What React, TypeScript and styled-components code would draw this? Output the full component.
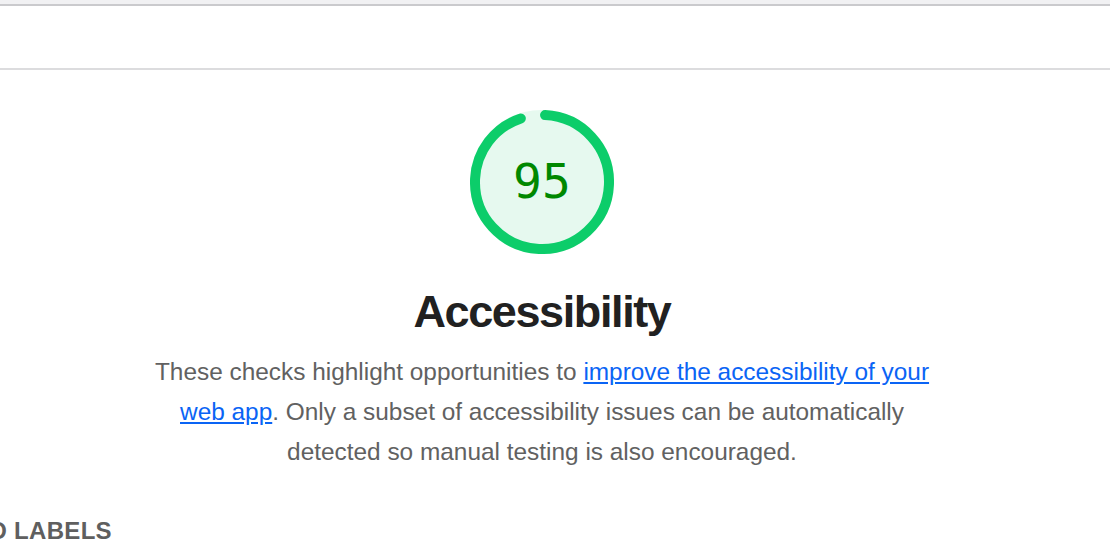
import React from "react";
import styled, { createGlobalStyle } from "styled-components";

const GlobalStyle = createGlobalStyle`
  html, body { margin: 0; padding: 0; background: #ffffff; }
  body {
    font-family: "Liberation Sans", Arial, Helvetica, sans-serif;
    -webkit-font-smoothing: antialiased;
    overflow: hidden;
  }
`;

const Page = styled.div`
  width: 1110px;
  height: 560px;
  overflow: hidden;
  display: flex;
  flex-direction: column;
`;

const TopStrip = styled.div`
  height: 4px;
  background: #f1f1f3;
  border-bottom: 2px solid #cacacd;
`;

const Toolbar = styled.div`
  height: 62px;
  border-bottom: 2px solid #dcdcde;
  background: #ffffff;
`;

const Report = styled.main`
  width: 1084px;
  display: flex;
  flex-direction: column;
  align-items: center;
`;

const GaugeWrap = styled.div`
  margin-top: 40px;
  width: 144px;
  height: 144px;
  position: relative;
`;

const GaugeSvg = styled.svg`
  display: block;
  width: 144px;
  height: 144px;
`;

const GaugeValue = styled.div`
  position: absolute;
  inset: 0;
  display: flex;
  align-items: center;
  justify-content: center;
  font-family: "DejaVu Sans Mono", Menlo, monospace;
  font-size: 48px;
  color: #008800;
  padding-bottom: 2px;
`;

const Title = styled.h1`
  margin: 32px 0 0;
  font-size: 45px;
  line-height: 52px;
  font-weight: 700;
  color: #212121;
  letter-spacing: -1.4px;
`;

const Description = styled.p`
  margin: 14px 0 0;
  max-width: 796px;
  text-align: center;
  font-size: 24.4px;
  line-height: 40px;
  color: #616161;
`;

const Link = styled.a`
  color: #0a64f5;
  text-decoration: underline;
  text-underline-offset: 2px;
`;

const GroupClip = styled.div`
  margin-top: 44px;
  overflow: hidden;
  width: 100%;
`;

const GroupTitle = styled.h2`
  margin: 0 0 0 -140px;
  font-size: 24px;
  line-height: 30px;
  font-weight: 700;
  color: #5f5f5f;
  letter-spacing: 0.3px;
  text-transform: uppercase;
  white-space: nowrap;
`;

const Gauge: React.FC<{ score: number }> = ({ score }) => {
  const r = 67;
  const c = 2 * Math.PI * r;
  const len = (338.4 / 360) * c;
  return (
    <GaugeWrap>
      <GaugeSvg viewBox="0 0 144 144">
        <circle cx="72" cy="72" r={r} fill="#e6f9ef" stroke="#e6f9ef" strokeWidth="10" />
        <circle
          cx="72"
          cy="72"
          r={r}
          fill="none"
          stroke="#0ccd6a"
          strokeWidth="10"
          strokeLinecap="round"
          strokeDasharray={`${len} ${c}`}
          transform="rotate(-87.4 72 72)"
        />
      </GaugeSvg>
      <GaugeValue>{score}</GaugeValue>
    </GaugeWrap>
  );
};

export default function App() {
  return (
    <Page>
      <GlobalStyle />
      <TopStrip />
      <Toolbar />
      <Report>
        <Gauge score={95} />
        <Title>Accessibility</Title>
        <Description>
          These checks highlight opportunities to{" "}
          <Link href="#">improve the accessibility of your web app</Link>. Only a subset of
          accessibility issues can be automatically detected so manual testing is also
          encouraged.
        </Description>
        <GroupClip>
          <GroupTitle>Names and labels</GroupTitle>
        </GroupClip>
      </Report>
    </Page>
  );
}
